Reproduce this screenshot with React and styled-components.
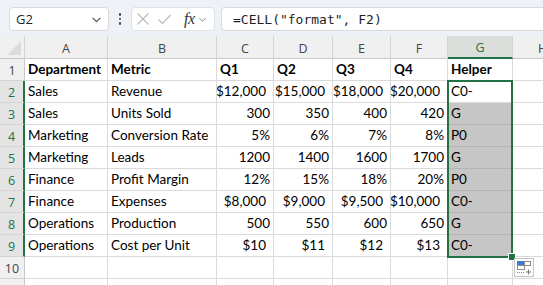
import styled, { createGlobalStyle } from "styled-components";

const GlobalStyle = createGlobalStyle`
  html, body {
    margin: 0;
    padding: 0;
    background: #ffffff;
    overflow: hidden;
  }
  body {
    font-family: Lato, "Liberation Sans", sans-serif;
  }
`;

const GREEN = "#217346";
const COLS = [83, 109, 57, 59, 58, 57, 65, 60];
const LETTERS = ["A", "B", "C", "D", "E", "F", "G", "H"];

const data = [
  ["Department", "Metric", "Q1", "Q2", "Q3", "Q4", "Helper"],
  ["Sales", "Revenue", "$12,000", "$15,000", "$18,000", "$20,000", "C0-"],
  ["Sales", "Units Sold", "300", "350", "400", "420", "G"],
  ["Marketing", "Conversion Rate", "5%", "6%", "7%", "8%", "P0"],
  ["Marketing", "Leads", "1200", "1400", "1600", "1700", "G"],
  ["Finance", "Profit Margin", "12%", "15%", "18%", "20%", "P0"],
  ["Finance", "Expenses", "$8,000", "$9,000", "$9,500", "$10,000", "C0-"],
  ["Operations", "Production", "500", "550", "600", "650", "G"],
  ["Operations", "Cost per Unit", "$10", "$11", "$12", "$13", "C0-"],
];

const Page = styled.div`
  width: 543px;
  height: 285px;
  overflow: hidden;
  position: relative;
`;

const Toolbar = styled.div`
  height: 36px;
  box-sizing: border-box;
  background: #eef1f5;
  display: flex;
  align-items: flex-start;
  padding: 7px 0 0 9px;
`;

const NameBox = styled.div`
  width: 100px;
  height: 24px;
  box-sizing: border-box;
  background: #fff;
  border: 1px solid #d6d9de;
  border-radius: 4px;
  display: flex;
  align-items: center;
  justify-content: space-between;
  padding: 0 6px 0 6px;
  font-family: "Open Sans", "Noto Sans", sans-serif;
  font-size: 13px;
  color: #1f1f1f;
`;

const Dots = styled.div`
  width: 22px;
  display: flex;
  flex-direction: column;
  align-items: center;
  justify-content: center;
  gap: 2px;
  height: 24px;
  span {
    width: 2.5px;
    height: 2.5px;
    border-radius: 50%;
    background: #444;
  }
`;

const FxGroup = styled.div`
  width: 84px;
  height: 24px;
  box-sizing: border-box;
  background: #fff;
  border: 1px solid #dfe2e6;
  border-radius: 4px;
  display: flex;
  align-items: center;
  padding: 0 0 0 5px;
`;

const FxIcon = styled.span`
  display: flex;
  align-items: center;
  margin-right: ${(p) => p.$gap}px;
`;

const FxLabel = styled.span`
  font-family: "Liberation Serif", "DejaVu Serif", serif;
  font-style: italic;
  font-size: 16px;
  color: #333;
  margin-right: 3px;
  letter-spacing: -0.5px;
`;

const FormulaBox = styled.div`
  flex: 1;
  height: 24px;
  box-sizing: border-box;
  margin-left: 6px;
  background: #fff;
  border: 1px solid #d6d9de;
  border-right: none;
  border-radius: 4px 0 0 4px;
  display: flex;
  align-items: center;
  padding-left: 11px;
  font-family: "DejaVu Sans Mono", "Liberation Mono", monospace;
  font-size: 13px;
  color: #1f1f1f;
`;

const Sheet = styled.div`
  display: grid;
  grid-template-columns: 25px ${COLS.map((c) => c + "px").join(" ")};
  grid-template-rows: 23px;
  grid-auto-rows: 22px;
  background: #fff;
`;

const Corner = styled.div`
  background: #f0f0f0;
  border-right: 1px solid #d4d4d4;
  border-bottom: 1px solid #c8c8c8;
  box-sizing: border-box;
  position: relative;
  &::after {
    content: "";
    position: absolute;
    right: 3px;
    bottom: 3px;
    border-style: solid;
    border-width: 0 0 14px 14px;
    border-color: transparent transparent #dcdcdc transparent;
  }
`;

const ColHead = styled.div`
  box-sizing: border-box;
  background: ${(p) => (p.$active ? "#dcdedc" : "#f0f0f0")};
  border-right: 1px solid #d4d4d4;
  border-bottom: ${(p) => (p.$active ? `2px solid ${GREEN}` : "1px solid #c8c8c8")};
  color: ${(p) => (p.$active ? GREEN : "#444")};
  font-family: "Open Sans", "Noto Sans", sans-serif;
  font-size: 12.5px;
  display: flex;
  align-items: center;
  justify-content: center;
  padding-top: 2px;
`;

const RowHead = styled.div`
  box-sizing: border-box;
  background: ${(p) => (p.$active ? "#e4e4e4" : "#f0f0f0")};
  border-right: ${(p) => (p.$active ? `2px solid ${GREEN}` : "1px solid #c8c8c8")};
  border-bottom: 1px solid #d4d4d4;
  color: ${(p) => (p.$active ? GREEN : "#444")};
  font-family: "Open Sans", "Noto Sans", sans-serif;
  font-size: 12.5px;
  display: flex;
  align-items: center;
  justify-content: center;
  padding-top: 1px;
`;

const Cell = styled.div`
  box-sizing: border-box;
  border-right: 1px solid;
  border-bottom: 1px solid;
  border-color: ${(p) => (p.$selected ? "#b4b4b4" : "#dadada")};
  background: ${(p) => (p.$selected ? "#c6c6c6" : "#fff")};
  font-size: 13.5px;
  font-weight: ${(p) => (p.$bold ? 700 : 400)};
  color: #000;
  white-space: nowrap;
  overflow: hidden;
  display: flex;
  align-items: flex-end;
  justify-content: ${(p) => (p.$right ? "flex-end" : "flex-start")};
  padding: 0 ${(p) => (p.$currency ? "7px" : "3px")} 2px 3px;
  line-height: 17px;
`;

const Selection = styled.div`
  position: absolute;
  left: 447px;
  top: 80px;
  width: 66px;
  height: 178px;
  box-sizing: border-box;
  border: 2px solid ${GREEN};
  pointer-events: none;
`;

const FillHandle = styled.div`
  position: absolute;
  right: -5px;
  bottom: -5px;
  width: 6px;
  height: 6px;
  background: ${GREEN};
  border: 1px solid #fff;
`;

const PasteButton = styled.div`
  position: absolute;
  left: 514px;
  top: 258px;
  width: 20px;
  height: 19px;
  box-sizing: border-box;
  background: #fff;
  border: 1px solid #c4c4c4;
  display: flex;
  align-items: center;
  justify-content: center;
`;

const Chevron = ({ size = 10, color = "#555" }) => (
  <svg width={size} height={size} viewBox="0 0 10 10">
    <path d="M1.5 3.5 L5 7 L8.5 3.5" fill="none" stroke={color} strokeWidth="1.1" />
  </svg>
);

const isNum = (v) => /^[$\d]/.test(v);

export default function App() {
  return (
    <Page>
      <GlobalStyle />
      <Toolbar>
        <NameBox>
          <span>G2</span>
          <Chevron size={11} />
        </NameBox>
        <Dots>
          <span />
          <span />
          <span />
        </Dots>
        <FxGroup>
          <FxIcon $gap={9}>
            <svg width="12" height="12" viewBox="0 0 12 12">
              <path d="M0.5 0.5 L11.5 11.5 M11.5 0.5 L0.5 11.5" stroke="#b8b8b8" strokeWidth="1.1" fill="none" />
            </svg>
          </FxIcon>
          <FxIcon $gap={13}>
            <svg width="13" height="11" viewBox="0 0 13 11">
              <path d="M0.5 5.5 L4.5 9.5 L12.5 1" stroke="#b8b8b8" strokeWidth="1.1" fill="none" />
            </svg>
          </FxIcon>
          <FxLabel>fx</FxLabel>
          <Chevron size={9} color="#888" />
        </FxGroup>
        <FormulaBox>=CELL("format", F2)</FormulaBox>
      </Toolbar>
      <Sheet>
        <Corner />
        {LETTERS.map((l) => (
          <ColHead key={l} $active={l === "G"}>
            {l}
          </ColHead>
        ))}
        {Array.from({ length: 11 }).map((_, r) => {
          const row = data[r] || [];
          const active = r >= 1 && r <= 8;
          return [
            <RowHead key={"h" + r} $active={active}>
              {r < 10 ? r + 1 : ""}
            </RowHead>,
            ...LETTERS.map((l, c) => {
              const v = row[c] || "";
              const num = r > 0 && c >= 2 && c <= 5;
              return (
                <Cell
                  key={l + r}
                  $bold={r === 0}
                  $right={num && isNum(v)}
                  $currency={num && v.startsWith("$")}
                  $selected={c === 6 && r >= 2 && r <= 8}
                >
                  {v}
                </Cell>
              );
            }),
          ];
        })}
      </Sheet>
      <Selection>
        <FillHandle />
      </Selection>
      <PasteButton>
        <svg width="16" height="15" viewBox="0 0 16 15">
          <rect x="1.5" y="1.5" width="7" height="4" fill="#3a7bd5" stroke="#3a7bd5" />
          <rect x="8.5" y="1.5" width="6" height="4" fill="none" stroke="#8a8a8a" />
          <rect x="1.5" y="5.5" width="7" height="4" fill="#fff" stroke="#8a8a8a" />
          <path d="M1 12.5 H9" stroke="#8a8a8a" strokeDasharray="1 1" />
          <path d="M12.5 9.5 V14.5 M10 12 H15" stroke="#777" />
        </svg>
      </PasteButton>
    </Page>
  );
}
